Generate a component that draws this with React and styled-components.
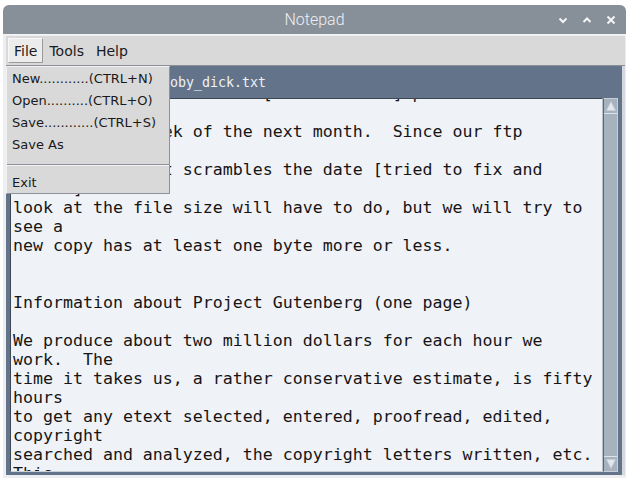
import React from "react";
import styled, { createGlobalStyle } from "styled-components";

const GlobalStyle = createGlobalStyle`
  html, body {
    margin: 0;
    padding: 0;
    background: #ffffff;
  }
`;

const Window = styled.div`
  position: relative;
  margin: 5px 0 0 3px;
  width: 623px;
  height: 473px;
  display: flex;
  flex-direction: column;
  background: #eceef1;
  border-radius: 6px 6px 0 0;
  overflow: hidden;
`;

const TitleBar = styled.div`
  position: relative;
  height: 29px;
  flex: none;
  display: flex;
  align-items: center;
  justify-content: center;
  background: #878f99;
  color: #eef0f2;
  font-family: Roboto, "DejaVu Sans", sans-serif;
  font-weight: 300;
  font-size: 16px;
  border-bottom: 1px solid #f4f5f6;
`;

const TitleButtons = styled.div`
  position: absolute;
  right: 10px;
  top: 0;
  height: 100%;
  display: flex;
  align-items: center;
  gap: 14px;
`;

const Body = styled.div`
  flex: 1;
  display: flex;
  flex-direction: column;
  padding: 1px 1px 3px 3px;
  min-height: 0;
`;

const MenuBar = styled.div`
  height: 29px;
  flex: none;
  display: flex;
  align-items: center;
  padding-left: 2px;
  background: #d9d9d9;
  border-bottom: 1px solid #8a8f96;
  font-family: "DejaVu Sans", sans-serif;
  font-size: 14px;
  color: #1a1a1a;
`;

const MenuItem = styled.div`
  height: 25px;
  display: flex;
  align-items: center;
  padding: 0 5px;
  box-sizing: border-box;
  background: ${(p) => (p.active ? "#ececec" : "transparent")};
  border: 1px solid ${(p) => (p.active ? "#9a9a9a" : "transparent")};
  border-top-color: ${(p) => (p.active ? "#f8f8f8" : "transparent")};
  border-left-color: ${(p) => (p.active ? "#f8f8f8" : "transparent")};
`;

const Content = styled.div`
  flex: 1;
  display: flex;
  flex-direction: column;
  background: #63748a;
  padding: 0 4px 3px 4px;
  min-height: 0;
  border-right: 3px solid #d3d8de;
`;

const FileLabel = styled.div`
  height: 32px;
  flex: none;
  display: flex;
  align-items: center;
  padding-left: 152px;
  font-family: "DejaVu Sans Mono", monospace;
  font-size: 13.3px;
  color: #eef1f5;
`;

const EditorRow = styled.div`
  flex: 1;
  display: flex;
  min-height: 0;
`;

const TextArea = styled.div`
  flex: 1;
  background: #eff2f7;
  border: 1px solid #3d4653;
  border-right-color: #b9c1cb;
  border-bottom-color: #c9d0d8;
  padding: 0 2px;
  overflow: hidden;
  font-family: "DejaVu Sans Mono", monospace;
  font-size: 16.6px;
  color: #151515;
`;

const Scroller = styled.div`
  margin-top: ${(p) => p.offset}px;
`;

const Line = styled.div`
  height: 19px;
  line-height: 19px;
  white-space: pre;
`;

const ScrollBar = styled.div`
  width: 13px;
  flex: none;
  display: flex;
  flex-direction: column;
  justify-content: space-between;
  background: #a7b2bf;
  border: 1px solid #c8cfd7;
  border-left-color: #5b6676;
`;

const Arrow = styled.div`
  height: 14px;
  display: flex;
  align-items: center;
  justify-content: center;
  border-bottom: ${(p) => (p.up ? "1px solid #dfe4ea" : "none")};
  border-top: ${(p) => (p.up ? "none" : "1px solid #dfe4ea")};
`;

const Dropdown = styled.div`
  position: absolute;
  left: 3px;
  top: 61px;
  width: 162px;
  padding: 0;
  background: #d9d9d9;
  border: 1px solid #8e9298;
  border-top-color: #f2f2f2;
  border-left-color: #f2f2f2;
  font-family: "DejaVu Sans", sans-serif;
  font-size: 13px;
  color: #1a1a1a;
`;

const DropItem = styled.div`
  height: 22px;
  display: flex;
  align-items: center;
  padding-left: 5px;
  white-space: pre;
`;

const Separator = styled.div`
  margin: 9px 0 5px 0;
  height: 0;
  border-top: 1px solid #8e9298;
  border-bottom: 1px solid #f4f4f4;
`;

const lines = [
  "up to date first edition [xxxxx10x.xxx] please check file",
  "sizes",
  "in the first week of the next month.  Since our ftp",
  "program has",
  "a bug in it that scrambles the date [tried to fix and",
  "failed] a",
  "look at the file size will have to do, but we will try to",
  "see a",
  "new copy has at least one byte more or less.",
  "",
  "",
  "Information about Project Gutenberg (one page)",
  "",
  "We produce about two million dollars for each hour we",
  "work.  The",
  "time it takes us, a rather conservative estimate, is fifty",
  "hours",
  "to get any etext selected, entered, proofread, edited,",
  "copyright",
  "searched and analyzed, the copyright letters written, etc.",
  "This",
  "etext is \"Moby Dick\"...",
];

const Chevron = ({ up }) => (
  <svg width="10" height="8" viewBox="0 0 10 8">
    <path
      d={up ? "M1.5 6 L5 2.5 L8.5 6" : "M1.5 2.5 L5 6 L8.5 2.5"}
      fill="none"
      stroke="#f4f5f7"
      strokeWidth="2"
    />
  </svg>
);

const Close = () => (
  <svg width="10" height="10" viewBox="0 0 10 10">
    <path d="M1.5 1.5 L8.5 8.5 M8.5 1.5 L1.5 8.5" stroke="#f4f5f7" strokeWidth="2" />
  </svg>
);

const Triangle = ({ up }) => (
  <svg width="10" height="10" viewBox="0 0 10 10">
    <path
      d={up ? "M5 0.5 L9.5 9.5 L0.5 9.5 Z" : "M0.5 0.5 L9.5 0.5 L5 9.5 Z"}
      fill="#e3e7ec"
      stroke="#c6ccd3"
      strokeWidth="0.8"
    />
  </svg>
);

export default function App() {
  return (
    <>
      <GlobalStyle />
      <Window>
        <TitleBar>
          Notepad
          <TitleButtons>
            <Chevron />
            <Chevron up />
            <Close />
          </TitleButtons>
        </TitleBar>
        <Body>
          <MenuBar>
            <MenuItem active>File</MenuItem>
            <MenuItem>Tools</MenuItem>
            <MenuItem>Help</MenuItem>
          </MenuBar>
          <Content>
            <FileLabel>moby_dick.txt</FileLabel>
            <EditorRow>
              <TextArea>
                <Scroller offset={-15}>
                  {lines.map((l, i) => (
                    <Line key={i}>{l}</Line>
                  ))}
                </Scroller>
              </TextArea>
              <ScrollBar>
                <Arrow up>
                  <Triangle up />
                </Arrow>
                <Arrow>
                  <Triangle />
                </Arrow>
              </ScrollBar>
            </EditorRow>
          </Content>
        </Body>
        <Dropdown>
          <DropItem>New............(CTRL+N)</DropItem>
          <DropItem>Open..........(CTRL+O)</DropItem>
          <DropItem>Save............(CTRL+S)</DropItem>
          <DropItem>Save As</DropItem>
          <Separator />
          <DropItem>Exit</DropItem>
        </Dropdown>
      </Window>
    </>
  );
}
